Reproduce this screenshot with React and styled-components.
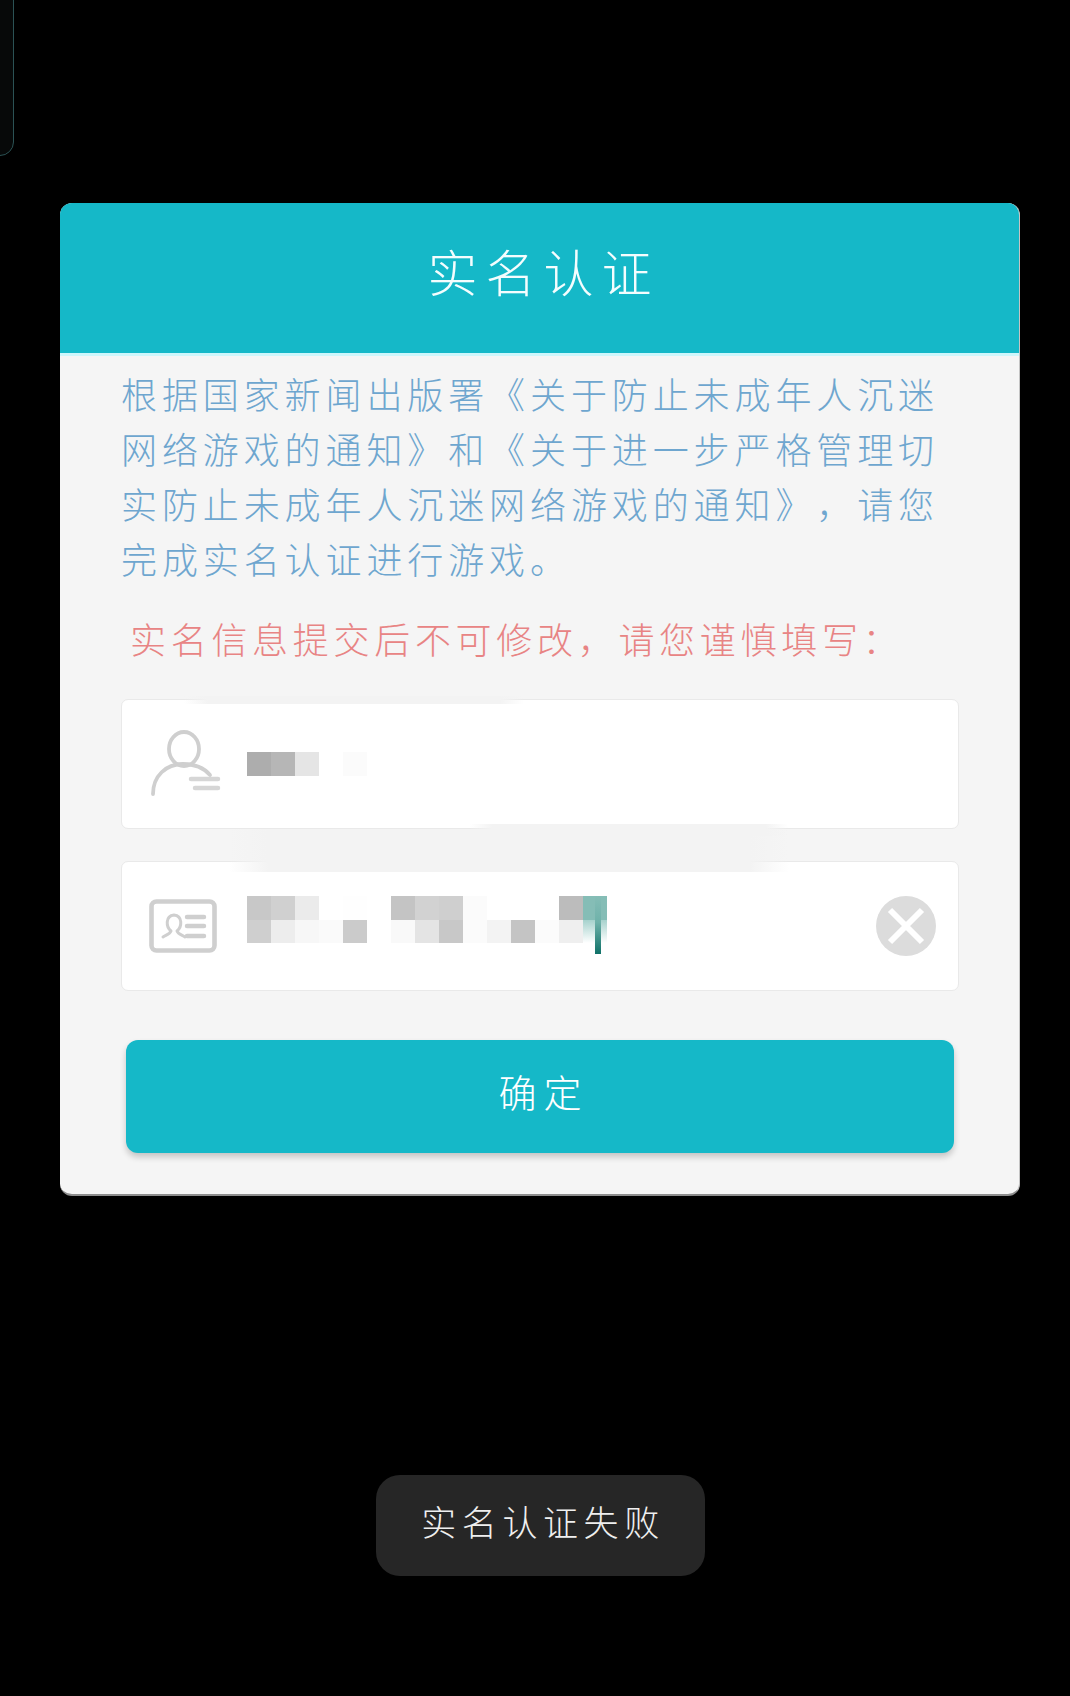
import React from "react";
import styled, { createGlobalStyle } from "styled-components";

const Global = createGlobalStyle`
  html, body { margin: 0; padding: 0; background: #000; }
  * { box-sizing: border-box; }
`;

const Screen = styled.div`
  position: relative;
  width: 1070px;
  height: 1696px;
  overflow: hidden;
  background: #000;
  padding: 203px 50px 0 60px;
  font-family: "Noto Sans CJK SC", "Noto Sans", sans-serif;
  font-weight: 300;
  text-spacing-trim: space-all;
  font-feature-settings: "palt" 0;
`;

const CornerFrame = styled.div`
  position: absolute;
  left: -40px;
  top: -40px;
  width: 54px;
  height: 196px;
  border: 1.5px solid #2b5254;
  border-radius: 14px;
  background: #070909;
`;

const Card = styled.section`
  width: 960px;
  height: 993px;
  background: #f5f5f5;
  border-radius: 12px;
  border-bottom: 2px solid #8d8d8d;
  border-right: 1px solid #c4c4c4;
  overflow: hidden;
`;

const Header = styled.header`
  height: 153px;
  background: #15b8c8;
  border-bottom: 3px solid #cdf6fb;
  display: flex;
  align-items: center;
  justify-content: center;
  padding-bottom: 16px;
`;

const Title = styled.h1`
  margin: 0;
  font-size: 50px;
  font-weight: 300;
  letter-spacing: 8px;
  padding-left: 8px;
  line-height: 1;
  color: #f4fdfe;
`;

const Body = styled.div`
  padding: 10px 61px 0;
`;

const Intro = styled.p`
  margin: 0;
  width: 830px;
  font-size: 36px;
  line-height: 55px;
  letter-spacing: 4.9px;
  color: #6ea6cf;
`;

const Warning = styled.p`
  margin: 25px 0 33px 9px;
  font-size: 36px;
  line-height: 55px;
  letter-spacing: 4.7px;
  color: #e88484;
  white-space: nowrap;
`;

const Fields = styled.div`
  position: relative;
  display: flex;
  flex-direction: column;
  gap: 32px;
`;

const Field = styled.div`
  height: 130px;
  width: 838px;
  background: #fff;
  border: 1.5px solid #e9e9e9;
  border-radius: 7px;
  display: flex;
  align-items: center;
  padding: 0 22px 0 20px;
  gap: 24.5px;
`;

const FieldIcon = styled.svg`
  flex: none;
  width: 80px;
  height: 70px;
  fill: none;
  stroke: #cfcfcf;
  stroke-width: 3.8;
  stroke-linecap: round;
  stroke-linejoin: round;
  filter: blur(0.6px);
`;

const Mosaic = styled.div`
  position: relative;
  display: grid;
  grid-template-columns: repeat(${(p) => p.$cols}, 24px);
  grid-auto-rows: 23.5px;
  margin-top: ${(p) => p.$shift}px;
`;

const Cell = styled.span`
  background: ${(p) => p.$c};
`;

const Caret = styled.span`
  position: absolute;
  left: 348px;
  top: 0;
  width: 6px;
  height: 58px;
  background: linear-gradient(180deg, #85bdb6 0%, #6fb2aa 45%, #0f7168 100%);
`;

const ClearIcon = styled.svg`
  flex: none;
  width: 60px;
  height: 60px;
  margin-left: auto;
  filter: blur(0.4px);
`;

const Smudge = styled.div`
  position: absolute;
  left: ${(p) => p.$x}px;
  top: ${(p) => p.$y}px;
  width: ${(p) => p.$w}px;
  height: ${(p) => p.$h}px;
  background: linear-gradient(90deg, rgba(243,243,243,0), #f3f3f3 7%, #f3f3f3 93%, rgba(243,243,243,0));
`;

const Submit = styled.button`
  display: block;
  width: 828px;
  height: 113px;
  margin: 49px 0 0 5px;
  border: 0;
  border-radius: 12px;
  background: #15b8c8;
  box-shadow: 0 4px 6px rgba(0, 0, 0, 0.2);
  color: #fff;
  font: inherit;
  font-size: 38px;
  letter-spacing: 7px;
  padding: 0 0 12px 7px;
`;

const Toast = styled.div`
  position: absolute;
  left: 376px;
  top: 1475px;
  width: 329px;
  height: 101px;
  border-radius: 24px;
  background: #262626;
  color: #efefef;
  font-size: 35px;
  letter-spacing: 5.6px;
  display: flex;
  align-items: center;
  justify-content: center;
  padding: 0 0 10px 5px;
`;

const nameRow = ["#adadad", "#b6b6b6", "#e5e5e5", "#fff", "#fbfbfb"];
const idRows = [
  "#c8c8c8", "#d0d0d0", "#ebebeb", "#fff", "#fefefe", "#fff", "#c4c4c4", "#d2d2d2", "#cfcfcf", "#fbfbfb", "#fff", "#fff", "#fff", "#bcbcbc", "#85bdb6",
  "#cfcfcf", "#ededed", "#f7f7f7", "#fafafa", "#cbcbcb", "#fff", "#f9f9f9", "#e4e4e4", "#c8c8c8", "#fbfbfb", "#f3f3f3", "#c4c4c4", "#fbfbfb", "#efefef",
  "linear-gradient(180deg, #a6d2cd, #fff)",
];

export default function App() {
  return (
    <Screen>
      <Global />
      <CornerFrame />
      <Card>
        <Header>
          <Title>实名认证</Title>
        </Header>
        <Body>
          <Intro>
            根据国家新闻出版署《关于防止未成年人沉迷网络游戏的通知》和《关于进一步严格管理切实防止未成年人沉迷网络游戏的通知》，请您完成实名认证进行游戏。
          </Intro>
          <Warning>实名信息提交后不可修改，请您谨慎填写：</Warning>
          <Fields>
            <Field>
              <FieldIcon viewBox="0 0 80 70">
                <ellipse cx="42" cy="20" rx="15" ry="17" />
                <path d="M11 65c0-18 13-30 30-30 12 0 21 4 27 11" />
                <path d="M49 50h27M53 59h23" stroke="#d6d6d6" strokeWidth="4.5" />
              </FieldIcon>
              <Mosaic $cols={5} $shift={0}>
                {nameRow.map((c, i) => (
                  <Cell key={i} $c={c} />
                ))}
              </Mosaic>
            </Field>
            <Field>
              <FieldIcon viewBox="0 0 80 70">
                <rect x="9.5" y="10.5" width="63" height="49" rx="5" strokeWidth="4.6" />
                <path d="M21 46c3-2 7-3 8-6-5-4-6-15 3-16 9 1 8 12 3 16 1 3 5 4 8 6" strokeWidth="3" />
                <path d="M45 26h17M45 35h17M45 45h17" strokeWidth="4.5" />
              </FieldIcon>
              <Mosaic $cols={15} $shift={-13}>
                {idRows.map((c, i) => (
                  <Cell key={i} $c={c} />
                ))}
                <Caret />
              </Mosaic>
              <ClearIcon viewBox="0 0 60 60">
                <circle cx="30" cy="30" r="30" fill="#dcdcdc" />
                <path d="M14 14l32 32M46 14L14 46" stroke="#fff" strokeWidth="6" />
              </ClearIcon>
            </Field>
            <Smudge $x={63} $y={-3} $w={340} $h={8} />
            <Smudge $x={349} $y={125} $w={318} $h={12} />
            <Smudge $x={108} $y={130} $w={560} $h={43} />
          </Fields>
          <Submit>确定</Submit>
        </Body>
      </Card>
      <Toast>实名认证失败</Toast>
    </Screen>
  );
}
